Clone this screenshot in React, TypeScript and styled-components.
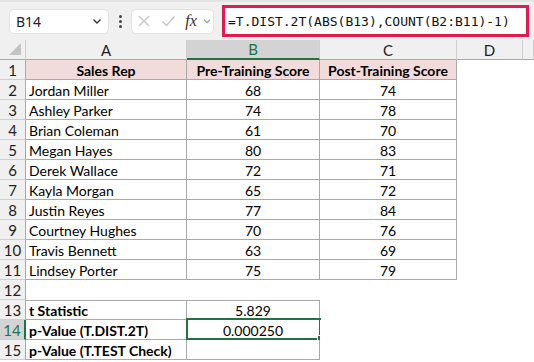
import React from "react";
import styled, { createGlobalStyle, css } from "styled-components";

const GlobalStyle = createGlobalStyle`
  html, body {
    margin: 0;
    padding: 0;
    background: #ffffff;
    overflow: hidden;
  }
`;

const GREEN = "#217346";
const GRID = "#a9a9a9";
const HEAD_LINE = "#cfcfcf";

const Window = styled.div`
  width: 534px;
  height: 362px;
  display: flex;
  flex-direction: column;
  font-family: Lato, "Noto Sans", sans-serif;
  overflow: hidden;
`;

const Toolbar = styled.div`
  height: 40px;
  box-sizing: border-box;
  background: #f0f0f0;
  border-top: 2px solid #e4e4e4;
  display: flex;
  align-items: center;
  padding-left: 9px;
`;

const Pill = styled.div<{ $w: number }>`
  width: ${(p) => p.$w}px;
  height: 25px;
  box-sizing: border-box;
  background: #ffffff;
  border: 1px solid #e2e2e2;
  border-radius: 5px;
  display: flex;
  align-items: center;
`;

const NameText = styled.span`
  flex: 1;
  padding-left: 6px;
  font-family: "Noto Sans", "Open Sans", sans-serif;
  font-size: 14px;
  color: #1f1f1f;
`;

const Dots = styled.div`
  width: 22px;
  display: flex;
  flex-direction: column;
  align-items: center;
  gap: 2px;
  span {
    width: 3px;
    height: 3px;
    border-radius: 50%;
    background: #444;
  }
`;

const IconSlot = styled.span<{ $w: number }>`
  width: ${(p) => p.$w}px;
  display: flex;
  align-items: center;
  justify-content: center;
`;

const Fx = styled.span`
  font-family: "Liberation Serif", serif;
  font-style: italic;
  font-size: 16px;
  color: #333;
`;

const FormulaBox = styled.div`
  margin-left: 8px;
  width: 307px;
  height: 32px;
  box-sizing: border-box;
  border: 3px solid #e21a4e;
  background: #ffffff;
  display: flex;
  align-items: center;
  padding-left: 3px;
  font-family: "DejaVu Sans Mono", "Liberation Mono", monospace;
  font-size: 13px;
  color: #111;
  white-space: nowrap;
`;

const Sheet = styled.div`
  display: grid;
  grid-template-columns: 26px 161px 133px 137px 66px 1fr;
  grid-auto-rows: 20px;
`;

const Corner = styled.div`
  background: #f0f0f0;
  border-right: 1px solid ${HEAD_LINE};
  border-bottom: 1px solid ${GRID};
  position: relative;
  &::after {
    content: "";
    position: absolute;
    right: 4px;
    bottom: 4px;
    width: 0;
    height: 0;
    border-left: 12px solid transparent;
    border-bottom: 12px solid #c3c3c3;
  }
`;

const ColHead = styled.div<{ $active?: boolean }>`
  background: ${(p) => (p.$active ? "#d3d3d3" : "#f0f0f0")};
  color: ${(p) => (p.$active ? GREEN : "#222")};
  border-right: 1px solid ${HEAD_LINE};
  border-bottom: ${(p) => (p.$active ? `2px solid ${GREEN}` : `1px solid ${GRID}`)};
  box-sizing: border-box;
  display: flex;
  align-items: center;
  justify-content: center;
  font-size: 15px;
`;

const RowHead = styled.div<{ $active?: boolean }>`
  background: ${(p) => (p.$active ? "#d3d3d3" : "#f0f0f0")};
  color: ${(p) => (p.$active ? GREEN : "#222")};
  border-right: ${(p) => (p.$active ? `2px solid ${GREEN}` : `1px solid ${GRID}`)};
  border-bottom: 1px solid ${HEAD_LINE};
  box-sizing: border-box;
  display: flex;
  align-items: center;
  justify-content: center;
  font-size: 15px;
`;

const Cell = styled.div<{
  $align?: "left" | "center";
  $bold?: boolean;
  $fill?: string;
  $boxed?: boolean;
  $top?: boolean;
}>`
  box-sizing: border-box;
  position: relative;
  display: flex;
  align-items: center;
  justify-content: ${(p) => (p.$align === "left" ? "flex-start" : "center")};
  padding: 1px 3px 0;
  font-size: 14px;
  font-weight: ${(p) => (p.$bold ? 700 : 400)};
  color: #000;
  background: ${(p) => p.$fill || "#ffffff"};
  white-space: nowrap;
  overflow: visible;
  ${(p) =>
    p.$boxed &&
    css`
      border-right: 1px solid ${GRID};
      border-bottom: 1px solid ${GRID};
    `}
  ${(p) =>
    p.$top &&
    css`
      border-top: 1px solid ${GRID};
    `}
`;

const Selection = styled.span`
  position: absolute;
  left: -1px;
  top: -2px;
  right: -2px;
  bottom: -1px;
  border: 2px solid ${GREEN};
  pointer-events: none;
`;

const Handle = styled.span`
  position: absolute;
  right: -5px;
  bottom: -4px;
  width: 5px;
  height: 5px;
  background: ${GREEN};
  border: 1px solid #fff;
`;

const Chevron = ({ color = "#333" }: { color?: string }) => (
  <svg width="12" height="12" viewBox="0 0 12 12">
    <path d="M2.5 4.5 L6 8 L9.5 4.5" fill="none" stroke={color} strokeWidth="1.3" />
  </svg>
);

const data: [string, number, number][] = [
  ["Jordan Miller", 68, 74],
  ["Ashley Parker", 74, 78],
  ["Brian Coleman", 61, 70],
  ["Megan Hayes", 80, 83],
  ["Derek Wallace", 72, 71],
  ["Kayla Morgan", 65, 72],
  ["Justin Reyes", 77, 84],
  ["Courtney Hughes", 70, 76],
  ["Travis Bennett", 63, 69],
  ["Lindsey Porter", 75, 79],
];

const PINK = "#f2dcdb";

export default function App() {
  return (
    <Window>
      <GlobalStyle />
      <Toolbar>
        <Pill $w={100}>
          <NameText>B14</NameText>
          <IconSlot $w={22}>
            <Chevron />
          </IconSlot>
        </Pill>
        <Dots>
          <span />
          <span />
          <span />
        </Dots>
        <Pill $w={83}>
          <IconSlot $w={24}>
            <svg width="14" height="14" viewBox="0 0 14 14">
              <path d="M2 2 L12 12 M12 2 L2 12" stroke="#c4c4c4" strokeWidth="1.3" />
            </svg>
          </IconSlot>
          <IconSlot $w={24}>
            <svg width="15" height="14" viewBox="0 0 15 14">
              <path d="M1.5 7.5 L5.5 11.5 L13.5 2.5" fill="none" stroke="#c4c4c4" strokeWidth="1.3" />
            </svg>
          </IconSlot>
          <IconSlot $w={22}>
            <Fx>fx</Fx>
          </IconSlot>
          <IconSlot $w={10}>
            <Chevron color="#9a9a9a" />
          </IconSlot>
        </Pill>
        <FormulaBox>=T.DIST.2T(ABS(B13),COUNT(B2:B11)-1)</FormulaBox>
      </Toolbar>

      <Sheet>
        <Corner />
        <ColHead>A</ColHead>
        <ColHead $active>B</ColHead>
        <ColHead>C</ColHead>
        <ColHead>D</ColHead>
        <ColHead />

        <RowHead>1</RowHead>
        <Cell $boxed $bold $fill={PINK}>Sales Rep</Cell>
        <Cell $boxed $bold $fill={PINK}>Pre-Training Score</Cell>
        <Cell $boxed $bold $fill={PINK}>Post-Training Score</Cell>
        <Cell />
        <Cell />

        {data.map(([name, pre, post], i) => (
          <React.Fragment key={name}>
            <RowHead>{i + 2}</RowHead>
            <Cell $boxed $align="left">{name}</Cell>
            <Cell $boxed>{pre}</Cell>
            <Cell $boxed>{post}</Cell>
            <Cell />
            <Cell />
          </React.Fragment>
        ))}

        <RowHead>12</RowHead>
        <Cell />
        <Cell />
        <Cell />
        <Cell />
        <Cell />

        <RowHead>13</RowHead>
        <Cell $boxed $top $bold $align="left">t Statistic</Cell>
        <Cell $boxed $top>5.829</Cell>
        <Cell />
        <Cell />
        <Cell />

        <RowHead $active>14</RowHead>
        <Cell $boxed $bold $align="left">p-Value (T.DIST.2T)</Cell>
        <Cell $boxed>
          0.000250
          <Selection>
            <Handle />
          </Selection>
        </Cell>
        <Cell />
        <Cell />
        <Cell />

        <RowHead>15</RowHead>
        <Cell $boxed $bold $align="left">p-Value (T.TEST Check)</Cell>
        <Cell $boxed />
        <Cell />
        <Cell />
        <Cell />
      </Sheet>
    </Window>
  );
}
